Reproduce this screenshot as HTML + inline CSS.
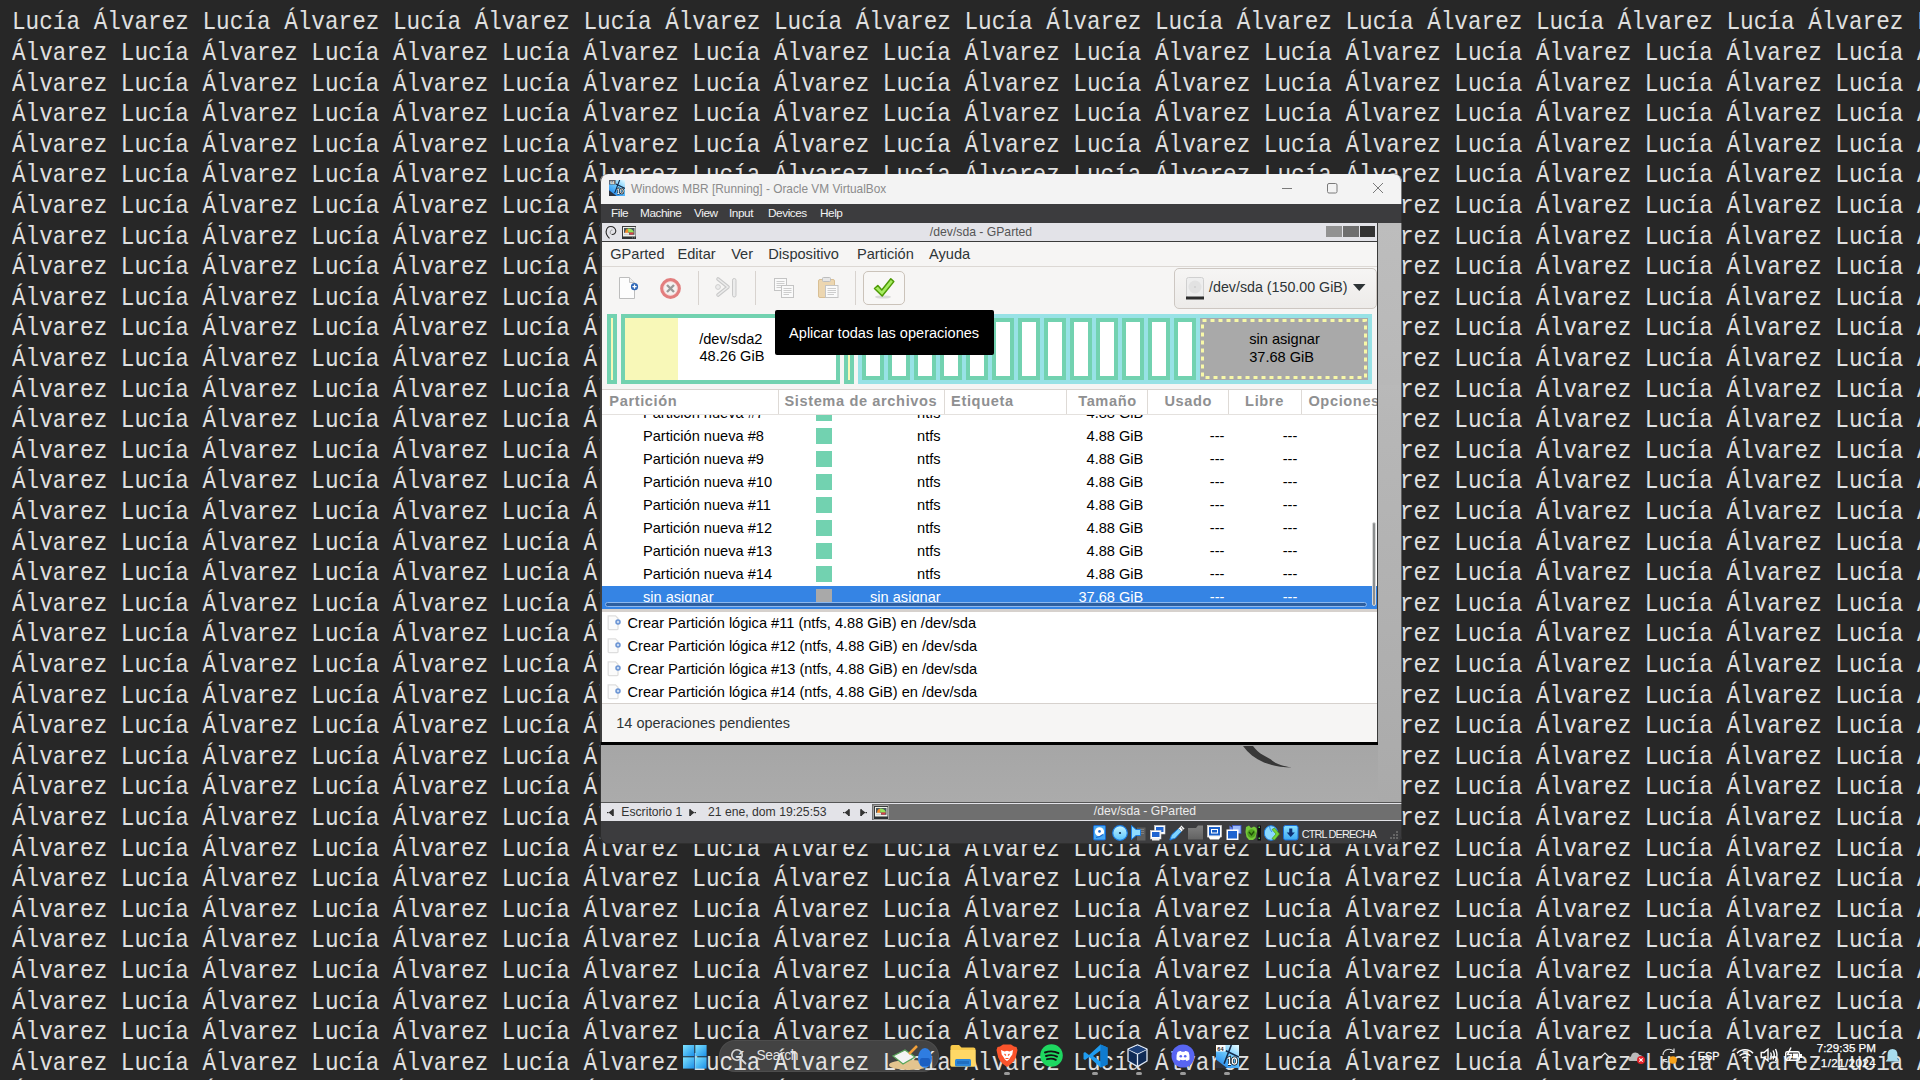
<!DOCTYPE html>
<html><head><meta charset="utf-8">
<style>
*{box-sizing:border-box}
html,body{margin:0;padding:0}
body{width:1920px;height:1080px;overflow:hidden;background:#272727;position:relative;font-family:"Liberation Sans",sans-serif}
.a{position:absolute;display:block}
#bg{position:absolute;left:0;top:0;width:1920px;height:1080px;overflow:hidden}
.r{position:absolute;left:11.7px;white-space:pre;font-family:"Liberation Mono",monospace;font-size:25px;line-height:30px;color:#e0e0e0;transform-origin:0 0;transform:scaleX(0.907)}
#win{position:absolute;left:600px;top:174px;width:802px;height:670px;border-radius:8px;overflow:hidden;background:#3c3c3e}
.t{position:absolute;white-space:pre}
#tb .t{right:auto}
</style></head><body>
<div id="bg">
<div class="r" style="top:8.30px">Lucía Álvarez Lucía Álvarez Lucía Álvarez Lucía Álvarez Lucía Álvarez Lucía Álvarez Lucía Álvarez Lucía Álvarez Lucía Álvarez Lucía Álvarez Lucía Álvarez </div>
<div class="r" style="top:38.90px">Álvarez Lucía Álvarez Lucía Álvarez Lucía Álvarez Lucía Álvarez Lucía Álvarez Lucía Álvarez Lucía Álvarez Lucía Álvarez Lucía Álvarez Lucía Álvarez Lucía </div>
<div class="r" style="top:69.50px">Álvarez Lucía Álvarez Lucía Álvarez Lucía Álvarez Lucía Álvarez Lucía Álvarez Lucía Álvarez Lucía Álvarez Lucía Álvarez Lucía Álvarez Lucía Álvarez Lucía </div>
<div class="r" style="top:100.10px">Álvarez Lucía Álvarez Lucía Álvarez Lucía Álvarez Lucía Álvarez Lucía Álvarez Lucía Álvarez Lucía Álvarez Lucía Álvarez Lucía Álvarez Lucía Álvarez Lucía </div>
<div class="r" style="top:130.70px">Álvarez Lucía Álvarez Lucía Álvarez Lucía Álvarez Lucía Álvarez Lucía Álvarez Lucía Álvarez Lucía Álvarez Lucía Álvarez Lucía Álvarez Lucía Álvarez Lucía </div>
<div class="r" style="top:161.30px">Álvarez Lucía Álvarez Lucía Álvarez Lucía Álvarez Lucía Álvarez Lucía Álvarez Lucía Álvarez Lucía Álvarez Lucía Álvarez Lucía Álvarez Lucía Álvarez Lucía </div>
<div class="r" style="top:191.90px">Álvarez Lucía Álvarez Lucía Álvarez Lucía Álvarez Lucía Álvarez Lucía Álvarez Lucía Álvarez Lucía Álvarez Lucía Álvarez Lucía Álvarez Lucía Álvarez Lucía </div>
<div class="r" style="top:222.50px">Álvarez Lucía Álvarez Lucía Álvarez Lucía Álvarez Lucía Álvarez Lucía Álvarez Lucía Álvarez Lucía Álvarez Lucía Álvarez Lucía Álvarez Lucía Álvarez Lucía </div>
<div class="r" style="top:253.10px">Álvarez Lucía Álvarez Lucía Álvarez Lucía Álvarez Lucía Álvarez Lucía Álvarez Lucía Álvarez Lucía Álvarez Lucía Álvarez Lucía Álvarez Lucía Álvarez Lucía </div>
<div class="r" style="top:283.70px">Álvarez Lucía Álvarez Lucía Álvarez Lucía Álvarez Lucía Álvarez Lucía Álvarez Lucía Álvarez Lucía Álvarez Lucía Álvarez Lucía Álvarez Lucía Álvarez Lucía </div>
<div class="r" style="top:314.30px">Álvarez Lucía Álvarez Lucía Álvarez Lucía Álvarez Lucía Álvarez Lucía Álvarez Lucía Álvarez Lucía Álvarez Lucía Álvarez Lucía Álvarez Lucía Álvarez Lucía </div>
<div class="r" style="top:344.90px">Álvarez Lucía Álvarez Lucía Álvarez Lucía Álvarez Lucía Álvarez Lucía Álvarez Lucía Álvarez Lucía Álvarez Lucía Álvarez Lucía Álvarez Lucía Álvarez Lucía </div>
<div class="r" style="top:375.50px">Álvarez Lucía Álvarez Lucía Álvarez Lucía Álvarez Lucía Álvarez Lucía Álvarez Lucía Álvarez Lucía Álvarez Lucía Álvarez Lucía Álvarez Lucía Álvarez Lucía </div>
<div class="r" style="top:406.10px">Álvarez Lucía Álvarez Lucía Álvarez Lucía Álvarez Lucía Álvarez Lucía Álvarez Lucía Álvarez Lucía Álvarez Lucía Álvarez Lucía Álvarez Lucía Álvarez Lucía </div>
<div class="r" style="top:436.70px">Álvarez Lucía Álvarez Lucía Álvarez Lucía Álvarez Lucía Álvarez Lucía Álvarez Lucía Álvarez Lucía Álvarez Lucía Álvarez Lucía Álvarez Lucía Álvarez Lucía </div>
<div class="r" style="top:467.30px">Álvarez Lucía Álvarez Lucía Álvarez Lucía Álvarez Lucía Álvarez Lucía Álvarez Lucía Álvarez Lucía Álvarez Lucía Álvarez Lucía Álvarez Lucía Álvarez Lucía </div>
<div class="r" style="top:497.90px">Álvarez Lucía Álvarez Lucía Álvarez Lucía Álvarez Lucía Álvarez Lucía Álvarez Lucía Álvarez Lucía Álvarez Lucía Álvarez Lucía Álvarez Lucía Álvarez Lucía </div>
<div class="r" style="top:528.50px">Álvarez Lucía Álvarez Lucía Álvarez Lucía Álvarez Lucía Álvarez Lucía Álvarez Lucía Álvarez Lucía Álvarez Lucía Álvarez Lucía Álvarez Lucía Álvarez Lucía </div>
<div class="r" style="top:559.10px">Álvarez Lucía Álvarez Lucía Álvarez Lucía Álvarez Lucía Álvarez Lucía Álvarez Lucía Álvarez Lucía Álvarez Lucía Álvarez Lucía Álvarez Lucía Álvarez Lucía </div>
<div class="r" style="top:589.70px">Álvarez Lucía Álvarez Lucía Álvarez Lucía Álvarez Lucía Álvarez Lucía Álvarez Lucía Álvarez Lucía Álvarez Lucía Álvarez Lucía Álvarez Lucía Álvarez Lucía </div>
<div class="r" style="top:620.30px">Álvarez Lucía Álvarez Lucía Álvarez Lucía Álvarez Lucía Álvarez Lucía Álvarez Lucía Álvarez Lucía Álvarez Lucía Álvarez Lucía Álvarez Lucía Álvarez Lucía </div>
<div class="r" style="top:650.90px">Álvarez Lucía Álvarez Lucía Álvarez Lucía Álvarez Lucía Álvarez Lucía Álvarez Lucía Álvarez Lucía Álvarez Lucía Álvarez Lucía Álvarez Lucía Álvarez Lucía </div>
<div class="r" style="top:681.50px">Álvarez Lucía Álvarez Lucía Álvarez Lucía Álvarez Lucía Álvarez Lucía Álvarez Lucía Álvarez Lucía Álvarez Lucía Álvarez Lucía Álvarez Lucía Álvarez Lucía </div>
<div class="r" style="top:712.10px">Álvarez Lucía Álvarez Lucía Álvarez Lucía Álvarez Lucía Álvarez Lucía Álvarez Lucía Álvarez Lucía Álvarez Lucía Álvarez Lucía Álvarez Lucía Álvarez Lucía </div>
<div class="r" style="top:742.70px">Álvarez Lucía Álvarez Lucía Álvarez Lucía Álvarez Lucía Álvarez Lucía Álvarez Lucía Álvarez Lucía Álvarez Lucía Álvarez Lucía Álvarez Lucía Álvarez Lucía </div>
<div class="r" style="top:773.30px">Álvarez Lucía Álvarez Lucía Álvarez Lucía Álvarez Lucía Álvarez Lucía Álvarez Lucía Álvarez Lucía Álvarez Lucía Álvarez Lucía Álvarez Lucía Álvarez Lucía </div>
<div class="r" style="top:803.90px">Álvarez Lucía Álvarez Lucía Álvarez Lucía Álvarez Lucía Álvarez Lucía Álvarez Lucía Álvarez Lucía Álvarez Lucía Álvarez Lucía Álvarez Lucía Álvarez Lucía </div>
<div class="r" style="top:834.50px">Álvarez Lucía Álvarez Lucía Álvarez Lucía Álvarez Lucía Álvarez Lucía Álvarez Lucía Álvarez Lucía Álvarez Lucía Álvarez Lucía Álvarez Lucía Álvarez Lucía </div>
<div class="r" style="top:865.10px">Álvarez Lucía Álvarez Lucía Álvarez Lucía Álvarez Lucía Álvarez Lucía Álvarez Lucía Álvarez Lucía Álvarez Lucía Álvarez Lucía Álvarez Lucía Álvarez Lucía </div>
<div class="r" style="top:895.70px">Álvarez Lucía Álvarez Lucía Álvarez Lucía Álvarez Lucía Álvarez Lucía Álvarez Lucía Álvarez Lucía Álvarez Lucía Álvarez Lucía Álvarez Lucía Álvarez Lucía </div>
<div class="r" style="top:926.30px">Álvarez Lucía Álvarez Lucía Álvarez Lucía Álvarez Lucía Álvarez Lucía Álvarez Lucía Álvarez Lucía Álvarez Lucía Álvarez Lucía Álvarez Lucía Álvarez Lucía </div>
<div class="r" style="top:956.90px">Álvarez Lucía Álvarez Lucía Álvarez Lucía Álvarez Lucía Álvarez Lucía Álvarez Lucía Álvarez Lucía Álvarez Lucía Álvarez Lucía Álvarez Lucía Álvarez Lucía </div>
<div class="r" style="top:987.50px">Álvarez Lucía Álvarez Lucía Álvarez Lucía Álvarez Lucía Álvarez Lucía Álvarez Lucía Álvarez Lucía Álvarez Lucía Álvarez Lucía Álvarez Lucía Álvarez Lucía </div>
<div class="r" style="top:1018.10px">Álvarez Lucía Álvarez Lucía Álvarez Lucía Álvarez Lucía Álvarez Lucía Álvarez Lucía Álvarez Lucía Álvarez Lucía Álvarez Lucía Álvarez Lucía Álvarez Lucía </div>
<div class="r" style="top:1048.70px">Álvarez Lucía Álvarez Lucía Álvarez Lucía Álvarez Lucía Álvarez Lucía Álvarez Lucía Álvarez Lucía Álvarez Lucía Álvarez Lucía Álvarez Lucía Álvarez Lucía </div>
<div class="r" style="top:1079.30px">Álvarez Lucía Álvarez Lucía Álvarez Lucía Álvarez Lucía Álvarez Lucía Álvarez Lucía Álvarez Lucía Álvarez Lucía Álvarez Lucía Álvarez Lucía Álvarez Lucía </div>
<div class="r" style="top:1109.90px">Álvarez Lucía Álvarez Lucía Álvarez Lucía Álvarez Lucía Álvarez Lucía Álvarez Lucía Álvarez Lucía Álvarez Lucía Álvarez Lucía Álvarez Lucía Álvarez Lucía </div>
</div>
<div id="win">
<div class="a" style="left:0px;top:0px;width:802px;height:30px;background:#f3f3f3"></div>
<svg class="a" style="left:9px;top:6px;" width="16" height="16" viewBox="0 0 16 16"><defs><linearGradient id="g10a" x1="0.9" y1="0" x2="0.2" y2="1"><stop offset="0" stop-color="#dff8ff"/><stop offset="0.45" stop-color="#6cc8fb"/><stop offset="1" stop-color="#1f86ee"/></linearGradient></defs><g transform="scale(0.695652)"><rect x="0" y="0" width="23" height="23" fill="url(#g10a)"/><path d="M0 14.6 L11 23 H0Z" fill="#2d3340"/><path d="M15.3 0 L8.1 18.8 M9.8 5.8 L23 12.1" stroke="#132a4a" stroke-width="1.6"/><rect x="0" y="0" width="9.5" height="6.5" fill="#5a5f66"/><text x="1.3" y="5.6" font-size="5.6" font-weight="bold" font-family="Liberation Sans" fill="#fff">64</text><path d="M11.5 13.5 L13.5 12.6 V19.4 M12 19.4 H15" fill="none" stroke="#111" stroke-width="2.6"/><path d="M11.5 13.5 L13.5 12.6 V19.4 M12 19.4 H15" fill="none" stroke="#fff" stroke-width="1.3"/><ellipse cx="18.4" cy="16" rx="2.2" ry="3.2" fill="none" stroke="#111" stroke-width="2.6"/><ellipse cx="18.4" cy="16" rx="2.2" ry="3.2" fill="none" stroke="#fff" stroke-width="1.3"/></g></svg>
<div class="t" style="top:9.97016px;font-size:11.85px;line-height:11.85px;color:#8b8b8b;left:31px;">Windows MBR [Running] - Oracle VM VirtualBox</div>
<svg class="a" style="left:682px;top:9px;" width="102" height="11" viewBox="0 0 102 11"><path d="M0 5.5 H10" stroke="#7a7a7a" stroke-width="1"/><rect x="45.5" y="0.5" width="9.5" height="9.5" rx="1.5" fill="none" stroke="#7a7a7a" stroke-width="1"/><path d="M91 0 L101 10 M101 0 L91 10" stroke="#7a7a7a" stroke-width="1"/></svg>
<div class="a" style="left:0px;top:30px;width:802px;height:19px;background:#3c3c3e"></div>
<div class="t" style="top:33.5125px;font-size:11.8px;line-height:11.8px;color:#f2f2f2;left:11px;letter-spacing:-0.45px">File</div>
<div class="t" style="top:33.5125px;font-size:11.8px;line-height:11.8px;color:#f2f2f2;left:40px;letter-spacing:-0.45px">Machine</div>
<div class="t" style="top:33.5125px;font-size:11.8px;line-height:11.8px;color:#f2f2f2;left:94px;letter-spacing:-0.45px">View</div>
<div class="t" style="top:33.5125px;font-size:11.8px;line-height:11.8px;color:#f2f2f2;left:129px;letter-spacing:-0.45px">Input</div>
<div class="t" style="top:33.5125px;font-size:11.8px;line-height:11.8px;color:#f2f2f2;left:168px;letter-spacing:-0.45px">Devices</div>
<div class="t" style="top:33.5125px;font-size:11.8px;line-height:11.8px;color:#f2f2f2;left:220px;letter-spacing:-0.45px">Help</div>
<div class="a" style="left:0px;top:49px;width:802px;height:598px;background:#a9a9a9"></div>
<div class="a" style="left:778px;top:49px;width:24px;height:579px;background:linear-gradient(180deg,#bdbdbd,#b2b2b2 60%,#aaaaaa)"></div>
<div class="a" style="left:0px;top:571px;width:778px;height:57px;background:linear-gradient(180deg,#a6a6a6,#ababab)"></div>
<div class="a" style="left:0px;top:49px;width:778px;height:522px;background:#f6f5f4"></div>
<div class="a" style="left:1px;top:49px;width:1px;height:522px;background:#3f3f3f"></div>
<div class="a" style="left:777px;top:49px;width:1px;height:522px;background:#3a3a3a"></div>
<div class="a" style="left:2px;top:49px;width:775px;height:18px;background:#e3e3e8"></div>
<div class="a" style="left:2px;top:67px;width:775px;height:1px;background:#3b3b3b"></div>
<div class="t" style="top:51.6739px;font-size:12.2px;line-height:12.2px;color:#555;left:381px;width:0;display:flex;justify-content:center;">/dev/sda - GParted</div>
<div class="a" style="left:726px;top:52px;width:16px;height:11px;background:#929292"></div>
<div class="a" style="left:743px;top:52px;width:16px;height:11px;background:#6e6e6e"></div>
<div class="a" style="left:760px;top:52px;width:15px;height:11px;background:#333333"></div>
<svg class="a" style="left:2px;top:49px;" width="16" height="17" viewBox="0 0 16 17"><path d="M7.5 15.4 C5 13 3.8 10.5 4.2 8.2 C4.6 5 6.5 3.5 8.8 3.5 C11.5 3.5 13.8 5.5 13.8 8 C13.8 10 12 11.6 10 11.5" fill="none" stroke="#2a2a2a" stroke-width="1.1"/><path d="M10 11.5 C8.6 11.4 8 10.2 8.3 8.8 C8.6 7.4 9.6 6.8 10.4 7" fill="none" stroke="#8a8a8a" stroke-width="0.9"/></svg>
<svg class="a" style="left:22px;top:52px;" width="14" height="13" viewBox="0 0 14 13"><rect x="0" y="0" width="14" height="12.8" fill="#3a3a3a"/><rect x="1" y="1" width="12.5" height="9.8" fill="#eef0ea"/><rect x="2" y="2" width="10.5" height="6.8" fill="#4a565c"/><path d="M3 7 Q3 3.5 5.5 2.8 L6.8 3.2 L6.2 7Z" fill="#f28a2a"/><path d="M5.8 2.4 Q10 2.2 11.6 5.5 L11.6 6.8 L6.5 6.5Z" fill="#96e45a"/><path d="M7.2 6.4 H11.8 L11 8.6 H7.4Z" fill="#d9404a"/><rect x="2" y="6.8" width="5" height="2" fill="#e6eae8"/><rect x="0" y="10.6" width="14" height="2.4" fill="#2e3234"/><rect x="10" y="11.3" width="1" height="1" fill="#777"/><rect x="12" y="11.3" width="1" height="1" fill="#777"/></svg>
<div class="a" style="left:2px;top:92px;width:775px;height:1px;background:#dcd8d4"></div>
<div class="t" style="top:72.6426px;font-size:14.6px;line-height:14.6px;color:#2e3436;left:10.2px;">GParted</div>
<div class="t" style="top:72.6426px;font-size:14.6px;line-height:14.6px;color:#2e3436;left:77.5px;">Editar</div>
<div class="t" style="top:72.6426px;font-size:14.6px;line-height:14.6px;color:#2e3436;left:131.2px;">Ver</div>
<div class="t" style="top:72.6426px;font-size:14.6px;line-height:14.6px;color:#2e3436;left:168.3px;">Dispositivo</div>
<div class="t" style="top:72.6426px;font-size:14.6px;line-height:14.6px;color:#2e3436;left:257px;">Partición</div>
<div class="t" style="top:72.6426px;font-size:14.6px;line-height:14.6px;color:#2e3436;left:329px;">Ayuda</div>
<div class="a" style="left:98px;top:97px;width:1px;height:34px;background:#d8d3cf"></div>
<div class="a" style="left:155px;top:97px;width:1px;height:34px;background:#d8d3cf"></div>
<div class="a" style="left:255px;top:97px;width:1px;height:34px;background:#d8d3cf"></div>
<svg class="a" style="left:18px;top:102px;" width="22" height="24" viewBox="0 0 22 24"><path d="M1.5 1.5 H11.5 L16.5 6.5 V22.5 H1.5 Z" fill="#fdfdfd" stroke="#bdbdbd" stroke-width="1"/><path d="M11.5 1.5 V6.5 H16.5" fill="#eee" stroke="#c4c4c4" stroke-width="1"/><circle cx="16.5" cy="10.7" r="3.6" fill="#2e66b5"/><path d="M16.5 8.6 V12.8 M14.4 10.7 H18.6" stroke="#fff" stroke-width="1.3"/></svg>
<svg class="a" style="left:59px;top:103px;" width="23" height="23" viewBox="0 0 23 23"><circle cx="11.5" cy="11.5" r="8.7" fill="#f4f2f1" stroke="#e27e7e" stroke-width="3.4"/><circle cx="11.5" cy="11.5" r="6.8" fill="none" stroke="#f7d4d4" stroke-width="0.8"/><path d="M8 8 L15 15 M15 8 L8 15" stroke="#9a9a9a" stroke-width="2.4"/></svg>
<svg class="a" style="left:113px;top:102px;" width="26" height="23" viewBox="0 0 26 23"><path d="M5 3 L15 11 L5 19" fill="none" stroke="#c9c9c9" stroke-width="3.6" stroke-linecap="round" stroke-linejoin="round"/><path d="M5 3 L15 11 L5 19" fill="none" stroke="#ececec" stroke-width="1.6" stroke-linecap="round" stroke-linejoin="round"/><circle cx="5" cy="11" r="2.4" fill="#ececec" stroke="#cfcfcf" stroke-width="1"/><rect x="19.5" y="2.5" width="3.5" height="18.5" rx="1.7" fill="#ececec" stroke="#c9c9c9" stroke-width="1"/></svg>
<svg class="a" style="left:173px;top:103px;" width="22" height="22" viewBox="0 0 22 22"><rect x="1.5" y="1.5" width="12" height="12" fill="#fafafa" stroke="#c4c4c4"/><path d="M3.5 4.5 H11.5 M3.5 6.5 H11.5 M3.5 8.5 H11.5 M3.5 10.5 H9" stroke="#cdcdcd" stroke-width="1"/><rect x="8.5" y="8.5" width="12" height="12" fill="#fafafa" stroke="#c4c4c4"/><path d="M10.5 11.5 H18.5 M10.5 13.5 H18.5 M10.5 15.5 H18.5 M10.5 17.5 H16" stroke="#cdcdcd" stroke-width="1"/></svg>
<svg class="a" style="left:217px;top:102px;" width="23" height="23" viewBox="0 0 23 23"><rect x="1.5" y="3.5" width="16" height="18" rx="1.5" fill="#ecd6b0" stroke="#d9bf94"/><rect x="5.5" y="1.5" width="8" height="4" rx="1" fill="#e6e6e6" stroke="#bdbdbd"/><rect x="8.5" y="9.5" width="12.5" height="12" fill="#fafafa" stroke="#c4c4c4"/><path d="M10.5 12.5 H19 M10.5 14.5 H19 M10.5 16.5 H19 M10.5 18.5 H17" stroke="#cdcdcd" stroke-width="1"/></svg>
<div class="a" style="left:263px;top:97px;width:42px;height:34px;background:#f8f7f6;border:1px solid #cbc3ba;border-radius:5px"></div>
<svg class="a" style="left:271px;top:102px;" width="26" height="24" viewBox="0 0 26 24"><ellipse cx="12" cy="21" rx="8" ry="1.6" fill="#000" opacity="0.12"/><path d="M3.5 12.5 L6.8 9.5 L10.8 14 L19.8 2.8 L22.8 5.6 L11.2 20 Z" fill="#a6ec62" stroke="#4e9a06" stroke-width="1.5" stroke-linejoin="round"/></svg>
<div class="a" style="left:574px;top:94px;width:203px;height:41px;background:linear-gradient(180deg,#f6f5f4,#edebe9);border:1px solid #cdc7c2;border-radius:5px"></div>
<svg class="a" style="left:586px;top:103px;" width="18" height="23" viewBox="0 0 18 23"><rect x="0.5" y="0.5" width="17" height="20" rx="2" fill="#eeeeee" stroke="#d0d0d0"/><circle cx="9" cy="10" r="6.5" fill="#e2e2e2"/><circle cx="9" cy="10" r="1" fill="#cfcfcf"/><rect x="0" y="19.5" width="18" height="3" fill="#2d2d2d"/></svg>
<div class="t" style="top:105.939px;font-size:14.25px;line-height:14.25px;color:#2e3436;left:609px;">/dev/sda (150.00 GiB)</div>
<svg class="a" style="left:753px;top:110px;" width="13" height="8" viewBox="0 0 13 8"><path d="M0 0 H12.5 L6.25 7 Z" fill="#2e3436"/></svg>
<div class="a" style="left:7px;top:140px;width:10px;height:70px;background:#fff;border:4px solid #72d2b0"></div>
<div class="a" style="left:11px;top:144px;width:2px;height:62px;background:#f8f8b8"></div>
<div class="a" style="left:21px;top:140px;width:219px;height:70px;background:#fff;border:4px solid #72d2b0"></div>
<div class="a" style="left:25px;top:144px;width:53px;height:62px;background:#f8f8b8"></div>
<div class="t" style="top:158.343px;font-size:14.6px;line-height:14.6px;color:#000;left:99.2px;">/dev/sda2</div>
<div class="t" style="top:175.243px;font-size:14.6px;line-height:14.6px;color:#000;left:99.5px;">48.26 GiB</div>
<div class="a" style="left:244px;top:140px;width:10px;height:70px;background:#fff;border:4px solid #72d2b0"></div>
<div class="a" style="left:248px;top:144px;width:2px;height:62px;background:#f8f8b8"></div>
<div class="a" style="left:258px;top:140px;width:514px;height:70px;background:#98e2e6"></div>
<div class="a" style="left:262px;top:144px;width:22px;height:62px;background:#fff;border:4px solid #72d2b0"></div>
<div class="a" style="left:288px;top:144px;width:22px;height:62px;background:#fff;border:4px solid #72d2b0"></div>
<div class="a" style="left:314px;top:144px;width:22px;height:62px;background:#fff;border:4px solid #72d2b0"></div>
<div class="a" style="left:340px;top:144px;width:22px;height:62px;background:#fff;border:4px solid #72d2b0"></div>
<div class="a" style="left:366px;top:144px;width:22px;height:62px;background:#fff;border:4px solid #72d2b0"></div>
<div class="a" style="left:392px;top:144px;width:22px;height:62px;background:#fff;border:4px solid #72d2b0"></div>
<div class="a" style="left:418px;top:144px;width:22px;height:62px;background:#fff;border:4px solid #72d2b0"></div>
<div class="a" style="left:444px;top:144px;width:22px;height:62px;background:#fff;border:4px solid #72d2b0"></div>
<div class="a" style="left:470px;top:144px;width:22px;height:62px;background:#fff;border:4px solid #72d2b0"></div>
<div class="a" style="left:496px;top:144px;width:22px;height:62px;background:#fff;border:4px solid #72d2b0"></div>
<div class="a" style="left:522px;top:144px;width:22px;height:62px;background:#fff;border:4px solid #72d2b0"></div>
<div class="a" style="left:548px;top:144px;width:22px;height:62px;background:#fff;border:4px solid #72d2b0"></div>
<div class="a" style="left:574px;top:144px;width:22px;height:62px;background:#fff;border:4px solid #72d2b0"></div>
<div class="a" style="left:600px;top:144px;width:168px;height:62px;background:#a9a9a9"></div>
<svg class="a" style="left:600px;top:144px;" width="168" height="62" viewBox="0 0 168 62"><rect x="2.5" y="2.5" width="163" height="57" fill="none" stroke="#f8f8a8" stroke-width="3" stroke-dasharray="4 4"/></svg>
<div class="t" style="top:158.443px;font-size:14.6px;line-height:14.6px;color:#000;left:649.2px;">sin asignar</div>
<div class="t" style="top:175.543px;font-size:14.6px;line-height:14.6px;color:#000;left:649.2px;">37.68 GiB</div>
<div class="a" style="left:2px;top:215px;width:775px;height:220px;background:#fff"></div>
<div class="a" style="left:2px;top:215px;width:775px;height:1px;background:#d8d3cf"></div>
<div class="a" style="left:2px;top:240px;width:775px;height:1px;background:#e4e1de"></div>
<div class="a" style="left:177.5px;top:216px;width:1px;height:24px;background:#dedad6"></div>
<div class="a" style="left:344px;top:216px;width:1px;height:24px;background:#dedad6"></div>
<div class="a" style="left:466px;top:216px;width:1px;height:24px;background:#dedad6"></div>
<div class="a" style="left:547px;top:216px;width:1px;height:24px;background:#dedad6"></div>
<div class="a" style="left:628px;top:216px;width:1px;height:24px;background:#dedad6"></div>
<div class="a" style="left:701px;top:216px;width:1px;height:24px;background:#dedad6"></div>
<div class="t" style="top:219.843px;font-size:14.6px;line-height:14.6px;color:#8f9091;font-weight:bold;left:9.3px;letter-spacing:0.62px">Partición</div>
<div class="t" style="top:219.843px;font-size:14.6px;line-height:14.6px;color:#8f9091;font-weight:bold;left:184.4px;letter-spacing:0.62px">Sistema de archivos</div>
<div class="t" style="top:219.843px;font-size:14.6px;line-height:14.6px;color:#8f9091;font-weight:bold;left:351.1px;letter-spacing:0.62px">Etiqueta</div>
<div class="t" style="top:219.843px;font-size:14.6px;line-height:14.6px;color:#8f9091;font-weight:bold;left:478.2px;letter-spacing:0.62px">Tamaño</div>
<div class="t" style="top:219.843px;font-size:14.6px;line-height:14.6px;color:#8f9091;font-weight:bold;left:564.4px;letter-spacing:0.62px">Usado</div>
<div class="t" style="top:219.843px;font-size:14.6px;line-height:14.6px;color:#8f9091;font-weight:bold;left:645.1px;letter-spacing:0.62px">Libre</div>
<div class="t" style="top:219.843px;font-size:14.6px;line-height:14.6px;color:#8f9091;font-weight:bold;left:708.4px;letter-spacing:0.62px">Opciones</div>
<div class="a" style="left:777px;top:211px;width:1px;height:35px;background:#3a3a3a"></div>
<div class="a" style="left:778px;top:211px;width:24px;height:35px;background:linear-gradient(180deg,#b9b9b9,#b7b7b7)"></div>
<div class="a" style="left:2px;top:241px;width:775px;height:194px;overflow:hidden">
<div class="a" style="left:0px;top:171px;width:775px;height:23px;background:#3584e4"></div>
<div class="t" style="top:-9.35744px;font-size:14.6px;line-height:14.6px;color:#000;left:41px;">Partición nueva #7</div>
<div class="a" style="left:214px;top:-10px;width:16px;height:16px;background:#72d2b0"></div>
<div class="t" style="top:-9.35744px;font-size:14.6px;line-height:14.6px;color:#000;right:436.4px;">ntfs</div>
<div class="t" style="top:-9.35744px;font-size:14.6px;line-height:14.6px;color:#000;right:233.7px;">4.88 GiB</div>
<div class="t" style="top:-9.35744px;font-size:14.6px;line-height:14.6px;color:#000;right:152.6px;">---</div>
<div class="t" style="top:-9.35744px;font-size:14.6px;line-height:14.6px;color:#000;right:79.7px;">---</div>
<div class="t" style="top:13.6426px;font-size:14.6px;line-height:14.6px;color:#000;left:41px;">Partición nueva #8</div>
<div class="a" style="left:214px;top:13px;width:16px;height:16px;background:#72d2b0"></div>
<div class="t" style="top:13.6426px;font-size:14.6px;line-height:14.6px;color:#000;right:436.4px;">ntfs</div>
<div class="t" style="top:13.6426px;font-size:14.6px;line-height:14.6px;color:#000;right:233.7px;">4.88 GiB</div>
<div class="t" style="top:13.6426px;font-size:14.6px;line-height:14.6px;color:#000;right:152.6px;">---</div>
<div class="t" style="top:13.6426px;font-size:14.6px;line-height:14.6px;color:#000;right:79.7px;">---</div>
<div class="t" style="top:36.6426px;font-size:14.6px;line-height:14.6px;color:#000;left:41px;">Partición nueva #9</div>
<div class="a" style="left:214px;top:36px;width:16px;height:16px;background:#72d2b0"></div>
<div class="t" style="top:36.6426px;font-size:14.6px;line-height:14.6px;color:#000;right:436.4px;">ntfs</div>
<div class="t" style="top:36.6426px;font-size:14.6px;line-height:14.6px;color:#000;right:233.7px;">4.88 GiB</div>
<div class="t" style="top:36.6426px;font-size:14.6px;line-height:14.6px;color:#000;right:152.6px;">---</div>
<div class="t" style="top:36.6426px;font-size:14.6px;line-height:14.6px;color:#000;right:79.7px;">---</div>
<div class="t" style="top:59.6426px;font-size:14.6px;line-height:14.6px;color:#000;left:41px;">Partición nueva #10</div>
<div class="a" style="left:214px;top:59px;width:16px;height:16px;background:#72d2b0"></div>
<div class="t" style="top:59.6426px;font-size:14.6px;line-height:14.6px;color:#000;right:436.4px;">ntfs</div>
<div class="t" style="top:59.6426px;font-size:14.6px;line-height:14.6px;color:#000;right:233.7px;">4.88 GiB</div>
<div class="t" style="top:59.6426px;font-size:14.6px;line-height:14.6px;color:#000;right:152.6px;">---</div>
<div class="t" style="top:59.6426px;font-size:14.6px;line-height:14.6px;color:#000;right:79.7px;">---</div>
<div class="t" style="top:82.6426px;font-size:14.6px;line-height:14.6px;color:#000;left:41px;">Partición nueva #11</div>
<div class="a" style="left:214px;top:82px;width:16px;height:16px;background:#72d2b0"></div>
<div class="t" style="top:82.6426px;font-size:14.6px;line-height:14.6px;color:#000;right:436.4px;">ntfs</div>
<div class="t" style="top:82.6426px;font-size:14.6px;line-height:14.6px;color:#000;right:233.7px;">4.88 GiB</div>
<div class="t" style="top:82.6426px;font-size:14.6px;line-height:14.6px;color:#000;right:152.6px;">---</div>
<div class="t" style="top:82.6426px;font-size:14.6px;line-height:14.6px;color:#000;right:79.7px;">---</div>
<div class="t" style="top:105.643px;font-size:14.6px;line-height:14.6px;color:#000;left:41px;">Partición nueva #12</div>
<div class="a" style="left:214px;top:105px;width:16px;height:16px;background:#72d2b0"></div>
<div class="t" style="top:105.643px;font-size:14.6px;line-height:14.6px;color:#000;right:436.4px;">ntfs</div>
<div class="t" style="top:105.643px;font-size:14.6px;line-height:14.6px;color:#000;right:233.7px;">4.88 GiB</div>
<div class="t" style="top:105.643px;font-size:14.6px;line-height:14.6px;color:#000;right:152.6px;">---</div>
<div class="t" style="top:105.643px;font-size:14.6px;line-height:14.6px;color:#000;right:79.7px;">---</div>
<div class="t" style="top:128.643px;font-size:14.6px;line-height:14.6px;color:#000;left:41px;">Partición nueva #13</div>
<div class="a" style="left:214px;top:128px;width:16px;height:16px;background:#72d2b0"></div>
<div class="t" style="top:128.643px;font-size:14.6px;line-height:14.6px;color:#000;right:436.4px;">ntfs</div>
<div class="t" style="top:128.643px;font-size:14.6px;line-height:14.6px;color:#000;right:233.7px;">4.88 GiB</div>
<div class="t" style="top:128.643px;font-size:14.6px;line-height:14.6px;color:#000;right:152.6px;">---</div>
<div class="t" style="top:128.643px;font-size:14.6px;line-height:14.6px;color:#000;right:79.7px;">---</div>
<div class="t" style="top:151.643px;font-size:14.6px;line-height:14.6px;color:#000;left:41px;">Partición nueva #14</div>
<div class="a" style="left:214px;top:151px;width:16px;height:16px;background:#72d2b0"></div>
<div class="t" style="top:151.643px;font-size:14.6px;line-height:14.6px;color:#000;right:436.4px;">ntfs</div>
<div class="t" style="top:151.643px;font-size:14.6px;line-height:14.6px;color:#000;right:233.7px;">4.88 GiB</div>
<div class="t" style="top:151.643px;font-size:14.6px;line-height:14.6px;color:#000;right:152.6px;">---</div>
<div class="t" style="top:151.643px;font-size:14.6px;line-height:14.6px;color:#000;right:79.7px;">---</div>
<div class="t" style="top:174.643px;font-size:14.6px;line-height:14.6px;color:#fff;left:41px;">sin asignar</div>
<div class="a" style="left:214px;top:174px;width:16px;height:16px;background:#a9a9a9"></div>
<div class="t" style="top:174.643px;font-size:14.6px;line-height:14.6px;color:#fff;right:436.4px;">sin asignar</div>
<div class="t" style="top:174.643px;font-size:14.6px;line-height:14.6px;color:#fff;right:233.7px;">37.68 GiB</div>
<div class="t" style="top:174.643px;font-size:14.6px;line-height:14.6px;color:#fff;right:152.6px;">---</div>
<div class="t" style="top:174.643px;font-size:14.6px;line-height:14.6px;color:#fff;right:79.7px;">---</div>
<div class="a" style="left:3px;top:187px;width:762px;height:5px;background:#2d5fa0;border:1px solid #8db8ee;border-radius:3px"></div>
<div class="a" style="left:769.5px;top:107px;width:4px;height:84px;background:#8b8e8f;border:1px solid #d8d8d8;border-radius:2px"></div>
</div>
<div class="a" style="left:2px;top:435px;width:775px;height:3px;background:#d6d1cd"></div>
<div class="a" style="left:2px;top:438px;width:775px;height:92px;background:#fff"></div>
<div class="a" style="left:2px;top:529px;width:775px;height:1px;background:#d6d1cd"></div>
<svg class="a" style="left:6px;top:440px;" width="16" height="17" viewBox="0 0 16 17"><path d="M2.2 1.8 H9.5 L12 4.3 V14.8 Q12 15.6 11.2 15.6 H3 Q2.2 15.6 2.2 14.8 Z" fill="#fbfbfb" stroke="#dedede" stroke-width="1.3"/><circle cx="12" cy="8" r="2" fill="#c8d8f0" stroke="#6a94d4" stroke-width="1.5"/></svg>
<div class="t" style="top:441.643px;font-size:14.6px;line-height:14.6px;color:#000;left:27.5px;">Crear Partición lógica #11 (ntfs, 4.88 GiB) en /dev/sda</div>
<svg class="a" style="left:6px;top:463px;" width="16" height="17" viewBox="0 0 16 17"><path d="M2.2 1.8 H9.5 L12 4.3 V14.8 Q12 15.6 11.2 15.6 H3 Q2.2 15.6 2.2 14.8 Z" fill="#fbfbfb" stroke="#dedede" stroke-width="1.3"/><circle cx="12" cy="8" r="2" fill="#c8d8f0" stroke="#6a94d4" stroke-width="1.5"/></svg>
<div class="t" style="top:464.643px;font-size:14.6px;line-height:14.6px;color:#000;left:27.5px;">Crear Partición lógica #12 (ntfs, 4.88 GiB) en /dev/sda</div>
<svg class="a" style="left:6px;top:486px;" width="16" height="17" viewBox="0 0 16 17"><path d="M2.2 1.8 H9.5 L12 4.3 V14.8 Q12 15.6 11.2 15.6 H3 Q2.2 15.6 2.2 14.8 Z" fill="#fbfbfb" stroke="#dedede" stroke-width="1.3"/><circle cx="12" cy="8" r="2" fill="#c8d8f0" stroke="#6a94d4" stroke-width="1.5"/></svg>
<div class="t" style="top:487.643px;font-size:14.6px;line-height:14.6px;color:#000;left:27.5px;">Crear Partición lógica #13 (ntfs, 4.88 GiB) en /dev/sda</div>
<svg class="a" style="left:6px;top:509px;" width="16" height="17" viewBox="0 0 16 17"><path d="M2.2 1.8 H9.5 L12 4.3 V14.8 Q12 15.6 11.2 15.6 H3 Q2.2 15.6 2.2 14.8 Z" fill="#fbfbfb" stroke="#dedede" stroke-width="1.3"/><circle cx="12" cy="8" r="2" fill="#c8d8f0" stroke="#6a94d4" stroke-width="1.5"/></svg>
<div class="t" style="top:510.643px;font-size:14.6px;line-height:14.6px;color:#000;left:27.5px;">Crear Partición lógica #14 (ntfs, 4.88 GiB) en /dev/sda</div>
<div class="t" style="top:541.753px;font-size:14.47px;line-height:14.47px;color:#2e3436;left:16.3px;">14 operaciones pendientes</div>
<div class="a" style="left:0px;top:568px;width:778px;height:3px;background:#000"></div>
<div class="a" style="left:175px;top:136px;width:219px;height:45px;background:#000;border-radius:2px"></div>
<div class="t" style="top:151.676px;font-size:14.56px;line-height:14.56px;color:#fff;left:189.1px;">Aplicar todas las operaciones</div>
<svg class="a" style="left:636px;top:571px;" width="60" height="26" viewBox="0 0 60 26"><path d="M7 1 L17 1 C19.5 4.5 23 8 27 10 L35 14.5 C38 17.5 43 20.5 56 22.5 C45 22.5 36 20.5 28 17.5 C19 13.5 12 8 7 1 Z" fill="#383838"/></svg>
<div class="a" style="left:0px;top:628px;width:802px;height:1px;background:#555"></div>
<div class="a" style="left:0px;top:629px;width:802px;height:18px;background:#e3e3e8"></div>
<svg class="a" style="left:7px;top:634px;" width="8" height="9" viewBox="0 0 8 9"><rect x="0" y="4" width="1.5" height="1.2" fill="#333"/><path d="M1.5 4.6 L5.2 1.8 V7.4 Z" fill="#333"/><rect x="5" y="1.2" width="1.8" height="6.8" fill="#333"/></svg>
<div class="t" style="top:632.174px;font-size:12.2px;line-height:12.2px;color:#333;left:21.3px;">Escritorio 1</div>
<svg class="a" style="left:88px;top:634px;" width="8" height="9" viewBox="0 0 8 9"><rect x="6.5" y="4" width="1.5" height="1.2" fill="#333"/><path d="M6.5 4.6 L2.8 1.8 V7.4 Z" fill="#333"/><rect x="1.2" y="1.2" width="1.8" height="6.8" fill="#333"/></svg>
<div class="t" style="top:632.174px;font-size:12.2px;line-height:12.2px;color:#333;left:108px;">21 ene, dom 19:25:53</div>
<svg class="a" style="left:243px;top:634px;" width="8" height="9" viewBox="0 0 8 9"><rect x="0" y="4" width="1.5" height="1.2" fill="#333"/><path d="M1.5 4.6 L5.2 1.8 V7.4 Z" fill="#333"/><rect x="5" y="1.2" width="1.8" height="6.8" fill="#333"/></svg>
<svg class="a" style="left:259px;top:634px;" width="8" height="9" viewBox="0 0 8 9"><rect x="6.5" y="4" width="1.5" height="1.2" fill="#333"/><path d="M6.5 4.6 L2.8 1.8 V7.4 Z" fill="#333"/><rect x="1.2" y="1.2" width="1.8" height="6.8" fill="#333"/></svg>
<div class="a" style="left:272px;top:630px;width:530px;height:16px;background:#6f6f6f"></div>
<svg class="a" style="left:273px;top:631px;" width="16" height="15" viewBox="0 0 16 15"><rect x="0.5" y="0.5" width="15" height="14" fill="#d8d8d8"/><g transform="translate(1,1)"><rect x="0" y="0" width="14" height="12.8" fill="#3a3a3a"/><rect x="1" y="1" width="12.5" height="9.8" fill="#eef0ea"/><rect x="2" y="2" width="10.5" height="6.8" fill="#4a565c"/><path d="M3 7 Q3 3.5 5.5 2.8 L6.8 3.2 L6.2 7Z" fill="#f28a2a"/><path d="M5.8 2.4 Q10 2.2 11.6 5.5 L11.6 6.8 L6.5 6.5Z" fill="#96e45a"/><path d="M7.2 6.4 H11.8 L11 8.6 H7.4Z" fill="#d9404a"/><rect x="2" y="6.8" width="5" height="2" fill="#e6eae8"/><rect x="0" y="10.6" width="14" height="2.4" fill="#2e3234"/></g></svg>
<div class="t" style="top:631.374px;font-size:12.2px;line-height:12.2px;color:#ececec;left:545px;width:0;display:flex;justify-content:center;">/dev/sda - GParted</div>
<div class="a" style="left:0px;top:647px;width:802px;height:23px;background:#3c3c3e"></div>
<svg class="a" style="left:493px;top:651px;" width="16" height="16" viewBox="0 0 16 16"><rect x="0.5" y="0.5" width="12" height="14.5" rx="1.2" fill="#45a6f2" stroke="#1766cf"/><circle cx="6.5" cy="6.8" r="4.6" fill="#fff"/><circle cx="6.5" cy="6.4" r="1.3" fill="#1766cf"/><path d="M3 12.5 Q7 12 10 9.5" stroke="#1766cf" stroke-width="1.2" fill="none"/></svg>
<svg class="a" style="left:511.5px;top:650.5px;" width="16" height="16" viewBox="0 0 16 16"><defs><linearGradient id="cdg" x1="0" y1="0" x2="0" y2="1"><stop offset="0" stop-color="#c8f4ff"/><stop offset="1" stop-color="#58c4fa"/></linearGradient></defs><circle cx="8" cy="8" r="7.3" fill="url(#cdg)" stroke="#1a7ee6" stroke-width="1.2"/><circle cx="8" cy="8" r="1.1" fill="#0b2a55"/></svg>
<svg class="a" style="left:531px;top:651px;" width="16" height="16" viewBox="0 0 16 16"><rect x="6" y="2.5" width="8.5" height="13" fill="#5e5e5e"/><path d="M7.5 4.5 H13 M7.5 6.5 H13 M7.5 8.5 H13" stroke="#888" stroke-width="0.8"/><path d="M0.5 0.5 L5 4.5 H9.5 V10.5 H5 L0.5 14.5Z" fill="#8fdcff" stroke="#1a7ee6" stroke-width="1"/></svg>
<svg class="a" style="left:550px;top:651px;" width="16" height="16" viewBox="0 0 16 16"><rect x="4.5" y="0.5" width="10.5" height="8.5" fill="#fff" stroke="#ccc" stroke-width="0.6"/><rect x="6" y="2" width="7.5" height="5" fill="#1f64d0"/><rect x="0.5" y="5.5" width="10.5" height="8.5" fill="#fff" stroke="#ccc" stroke-width="0.6"/><rect x="2" y="7" width="7.5" height="5" fill="#1f64d0"/><rect x="2" y="14" width="7.5" height="1.5" fill="#eee"/></svg>
<svg class="a" style="left:569px;top:651px;" width="16" height="16" viewBox="0 0 16 16"><path d="M1 14.5 L2.5 10 L9.5 3.5 L12.5 6.5 L6 13.5Z" fill="#7fd3ff" stroke="#1a7ee6" stroke-width="1"/><path d="M9.5 3.5 L12.5 0.5 L15.5 3.5 L12.5 6.5Z" fill="#fff" stroke="#888" stroke-width="0.6"/><circle cx="12.4" cy="2.8" r="0.6" fill="#333"/><circle cx="13.6" cy="4" r="0.6" fill="#333"/><circle cx="1.5" cy="14.5" r="1" fill="#1a7ee6"/></svg>
<svg class="a" style="left:588px;top:651px;" width="16" height="16" viewBox="0 0 16 16"><defs><linearGradient id="fdg" x1="0" y1="0" x2="0" y2="1"><stop offset="0" stop-color="#808080"/><stop offset="1" stop-color="#626262"/></linearGradient></defs><path d="M0 3 H8 L10 0.5 H15 V14.5 H0Z" fill="url(#fdg)"/></svg>
<svg class="a" style="left:607px;top:651px;" width="16" height="16" viewBox="0 0 16 16"><rect x="0.5" y="0.5" width="14" height="11.5" fill="#fff" stroke="#ddd" stroke-width="0.6"/><rect x="2" y="2" width="11" height="8.5" fill="#1a5fc8"/><rect x="4" y="4" width="7" height="4.5" fill="#fff"/><rect x="5" y="5" width="5" height="2.5" fill="#1a5fc8"/><path d="M1.5 12 H13.5 L12 14.5 H3Z" fill="#fff"/></svg>
<svg class="a" style="left:626px;top:651px;" width="16" height="16" viewBox="0 0 16 16"><rect x="6.5" y="0.5" width="8.5" height="8" fill="#9bb8f8" stroke="#3a55c8" stroke-width="0.8"/><path d="M3.5 0.5 L6.5 3 V6 L3.5 7.5Z" fill="#5a7ae8"/><rect x="0.5" y="4.5" width="12" height="10.5" fill="#fff"/><rect x="2" y="6" width="9" height="7.5" fill="#1f64d0"/></svg>
<svg class="a" style="left:645px;top:651px;" width="16" height="16" viewBox="0 0 16 16"><path d="M1 2 L4 0.5 L6 3 L9 1.5 L11.5 3 L12 6 L10.5 13 L8 15 L4 15 L1.5 12 L0.5 7Z" fill="#74c83a"/><circle cx="6.5" cy="8.5" r="4.2" fill="#4fa020"/><path d="M4 7 L6.5 10 L9 6.5" fill="none" stroke="#1f4a08" stroke-width="1.3"/><rect x="12.5" y="0.5" width="3.5" height="15" fill="#0d0d0d"/><rect x="13.5" y="1.5" width="1.5" height="1.5" fill="#5c5"/><rect x="13.5" y="12.5" width="1.5" height="1.5" fill="#5c5"/></svg>
<svg class="a" style="left:664px;top:651px;" width="16" height="16" viewBox="0 0 16 16"><ellipse cx="7" cy="8" rx="6.7" ry="7.3" fill="#8ad8ff" stroke="#1a7ee6" stroke-width="1"/><path d="M5.5 1.5 Q6 5 8 7" stroke="#1a7ee6" stroke-width="0.8" fill="none"/><path d="M8 4.5 L10.5 3 L15.5 9 L10.5 15 L8 13.5 L12 9Z" fill="#74d43a" stroke="#3c8a12" stroke-width="0.6"/></svg>
<svg class="a" style="left:683px;top:651px;" width="16" height="16" viewBox="0 0 16 16"><defs><linearGradient id="kbg" x1="0" y1="0" x2="0" y2="1"><stop offset="0" stop-color="#8ae0ff"/><stop offset="1" stop-color="#3aa8f2"/></linearGradient></defs><rect x="0.5" y="0.5" width="14.5" height="14.5" rx="2" fill="url(#kbg)" stroke="#1a6fd8"/><path d="M6.2 3.5 H9.3 V7.5 H11.8 L7.75 12 L3.7 7.5 H6.2Z" fill="#0d2f73"/></svg>
<div class="t" style="top:654.574px;font-size:10.9px;line-height:10.9px;color:#f0f0f0;left:701.7px;letter-spacing:-0.85px">CTRL DERECHA</div>
<svg class="a" style="left:788px;top:657px;" width="11" height="11" viewBox="0 0 11 11"><g fill="#666"><rect x="8" y="0" width="2" height="2"/><rect x="5" y="3" width="2" height="2"/><rect x="8" y="3" width="2" height="2"/><rect x="2" y="6" width="2" height="2"/><rect x="5" y="6" width="2" height="2"/><rect x="8" y="6" width="2" height="2"/></g></svg>
<div class="a" style="left:0;top:0;width:802px;height:670px;border-left:1px solid rgba(40,40,40,0.9);border-right:1px solid rgba(40,40,40,0.6);border-bottom:1px solid rgba(40,40,40,0.6);border-radius:8px"></div>
</div>
<div id="tb">
<svg class="a" style="left:683px;top:1045px;" width="24" height="24" viewBox="0 0 24 24"><defs><linearGradient id="wg" x1="0" y1="0" x2="1" y2="1"><stop offset="0" stop-color="#7fe3ff"/><stop offset="1" stop-color="#1a8fe8"/></linearGradient></defs><rect x="0" y="0" width="11.3" height="11.3" fill="url(#wg)"/><rect x="12.3" y="0" width="11.3" height="11.3" fill="url(#wg)"/><rect x="0" y="12.3" width="11.3" height="11.3" fill="url(#wg)"/><rect x="12.3" y="12.3" width="11.3" height="11.3" fill="url(#wg)"/></svg>
<div class="a" style="left:719px;top:1040px;width:220px;height:32px;background:rgba(255,255,255,0.135);border:1px solid rgba(255,255,255,0.05);border-radius:16px"></div>
<svg class="a" style="left:730px;top:1048px;" width="17" height="17" viewBox="0 0 17 17"><circle cx="7" cy="7" r="5.2" fill="none" stroke="#d8d8d8" stroke-width="1.6"/><path d="M10.8 10.8 L15.5 15.5" stroke="#d8d8d8" stroke-width="1.8" stroke-linecap="round"/></svg>
<div class="t" style="top:1048.92px;font-size:13.8px;line-height:13.8px;color:#e4e4e4;left:756.5px;letter-spacing:-0.35px">Search</div>
<svg class="a" style="left:887px;top:1044px;" width="46" height="27" viewBox="0 0 46 27"><ellipse cx="22" cy="21" rx="20" ry="5" fill="#e3c48f"/><path d="M6 12 L18 6 L28 13 L16 20Z" fill="#f4f4f4" stroke="#5aa55a" stroke-width="1.3"/><path d="M22 10 L30 2" stroke="#f3a13a" stroke-width="2.5"/><ellipse cx="38" cy="14" rx="7" ry="10" fill="#2f7de1"/><rect x="33" y="14" width="10" height="8" rx="2" fill="#1b5fc2"/></svg>
<svg class="a" style="left:950px;top:1044px;" width="26" height="23" viewBox="0 0 26 23"><path d="M0.5 3 Q0.5 1 2.5 1 H9 L11.5 3.5 H23.5 Q25.5 3.5 25.5 5.5 V21 Q25.5 22.5 24 22.5 H2 Q0.5 22.5 0.5 21Z" fill="#f7c94b"/><path d="M0.5 6 H25.5 V21 Q25.5 22.5 24 22.5 H2 Q0.5 22.5 0.5 21Z" fill="#ffd866"/><rect x="5" y="15" width="16" height="7.5" rx="1.5" fill="#2b86d9"/><rect x="7" y="17" width="12" height="3" fill="#1f6fc0"/></svg>
<svg class="a" style="left:996px;top:1044px;" width="22" height="24" viewBox="0 0 22 24"><path d="M4 2.5 L7 0.5 H15 L18 2.5 L20.5 3 L21.5 6 L19.8 13.5 Q18.5 17.5 15 20 L11 23 L7 20 Q3.5 17.5 2.2 13.5 L0.5 6 L1.5 3Z" fill="#fb542b"/><path d="M5 6 L8.5 7.5 L11 6.8 L13.5 7.5 L17 6 L16.3 10.5 L14.5 13 L13 15.5 L11 17 L9 15.5 L7.5 13 L5.7 10.5Z" fill="#fff"/><path d="M8.5 10 L10 11.5 M13.5 10 L12 11.5 M9.5 14.5 H12.5" stroke="#fb542b" stroke-width="1.1"/></svg>
<svg class="a" style="left:1040px;top:1044px;" width="23" height="23" viewBox="0 0 23 23"><circle cx="11.5" cy="11.5" r="11.3" fill="#1ed760"/><path d="M5 8.5 Q12 6 18.5 9.2 M6 12 Q12 10 17 12.6 M7 15.2 Q12 13.8 15.8 15.8" fill="none" stroke="#111" stroke-width="1.9" stroke-linecap="round"/></svg>
<svg class="a" style="left:1083px;top:1044px;" width="25" height="24" viewBox="0 0 25 24"><path d="M17.5 0.5 L24.5 3.5 V20.5 L17.5 23.5 L6 13 L2 16 L0.5 15 V9 L2 8 L6 11 L17.5 0.5Z M17.5 6.5 L10 12 L17.5 17.5Z" fill="#1f9cf0" fill-rule="evenodd"/><path d="M17.5 0.5 L24.5 3.5 V20.5 L17.5 23.5Z" fill="#0f7bd0"/></svg>
<svg class="a" style="left:1127px;top:1044px;" width="21" height="24" viewBox="0 0 21 24"><path d="M10.5 0.8 L20 5.2 V17 L10.5 22.6 L1 17 V5.2Z" fill="#0f2a55" stroke="#dfe8f4" stroke-width="1.3" stroke-linejoin="round"/><path d="M1 5.2 L10.5 10 L20 5.2 M10.5 10 V22.6" fill="none" stroke="#dfe8f4" stroke-width="1.3"/><path d="M1.6 5.4 L10.5 1.4 L19.4 5.4 L10.5 9.4Z" fill="#1c3f78"/></svg>
<svg class="a" style="left:1171px;top:1044px;" width="24" height="24" viewBox="0 0 24 24"><circle cx="12" cy="12" r="11.5" fill="#5865f2"/><path d="M6.5 8 Q9 6.5 10 7 L10.5 7.8 Q12 7.5 13.5 7.8 L14 7 Q15 6.5 17.5 8 Q19 11 18.5 15.5 Q17 16.8 15.5 17 L14.7 15.8 Q12 16.6 9.3 15.8 L8.5 17 Q7 16.8 5.5 15.5 Q5 11 6.5 8Z" fill="#fff"/><circle cx="9.8" cy="12.3" r="1.3" fill="#5865f2"/><circle cx="14.2" cy="12.3" r="1.3" fill="#5865f2"/></svg>
<svg class="a" style="left:1215.5px;top:1044.5px;" width="23" height="23" viewBox="0 0 23 23"><defs><linearGradient id="g10b" x1="0.9" y1="0" x2="0.2" y2="1"><stop offset="0" stop-color="#dff8ff"/><stop offset="0.45" stop-color="#6cc8fb"/><stop offset="1" stop-color="#1f86ee"/></linearGradient></defs><g transform="scale(1)"><rect x="0" y="0" width="23" height="23" fill="url(#g10b)"/><path d="M0 14.6 L11 23 H0Z" fill="#2d3340"/><path d="M15.3 0 L8.1 18.8 M9.8 5.8 L23 12.1" stroke="#132a4a" stroke-width="1.6"/><rect x="0" y="0" width="9.5" height="6.5" fill="#fbfbfb"/><text x="1.3" y="5.6" font-size="5.6" font-weight="bold" font-family="Liberation Sans" fill="#222">64</text><path d="M11.5 13.5 L13.5 12.6 V19.4 M12 19.4 H15" fill="none" stroke="#111" stroke-width="2.6"/><path d="M11.5 13.5 L13.5 12.6 V19.4 M12 19.4 H15" fill="none" stroke="#fff" stroke-width="1.3"/><ellipse cx="18.4" cy="16" rx="2.2" ry="3.2" fill="none" stroke="#111" stroke-width="2.6"/><ellipse cx="18.4" cy="16" rx="2.2" ry="3.2" fill="none" stroke="#fff" stroke-width="1.3"/></g></svg>
<div class="a" style="left:1003.7px;top:1072.2px;width:6px;height:2.6px;background:#9a9a9a;border-radius:2px"></div>
<div class="a" style="left:1092px;top:1072.2px;width:6px;height:2.6px;background:#9a9a9a;border-radius:2px"></div>
<div class="a" style="left:1136.2px;top:1072.2px;width:6px;height:2.6px;background:#9a9a9a;border-radius:2px"></div>
<div class="a" style="left:1180.1px;top:1072.2px;width:6px;height:2.6px;background:#9a9a9a;border-radius:2px"></div>
<div class="a" style="left:1224px;top:1072.2px;width:6px;height:2.6px;background:#9a9a9a;border-radius:2px"></div>
<svg class="a" style="left:1599px;top:1052px;" width="12" height="7" viewBox="0 0 12 7"><path d="M0.5 6.5 L6 1 L11.5 6.5" fill="none" stroke="#e8e8e8" stroke-width="1.2"/></svg>
<svg class="a" style="left:1628px;top:1049px;" width="18" height="16" viewBox="0 0 18 16"><path d="M2 12 Q0 12 0.5 9.5 Q1 7.5 3 7.5 Q3.5 3.5 7.5 3.5 Q10.5 3.5 11.5 6 Q14.5 6 14.5 9 V12Z" fill="#bbb"/><circle cx="13" cy="11" r="4" fill="#e3242b"/><path d="M11.3 9.3 L14.7 12.7 M14.7 9.3 L11.3 12.7" stroke="#fff" stroke-width="1.1"/></svg>
<svg class="a" style="left:1660px;top:1047px;" width="18" height="18" viewBox="0 0 18 18"><path d="M3 8 A6 6 0 0 1 14 5 M14 1.5 V5.5 H10" fill="none" stroke="#e0e0e0" stroke-width="1.2"/><path d="M13 11 A6 6 0 0 1 3 13 M3 16.5 V12.5 H7" fill="none" stroke="#e0e0e0" stroke-width="1.2"/><circle cx="13" cy="13" r="3.8" fill="#f7a21b"/></svg>
<div class="t" style="top:1051.36px;font-size:10.8px;line-height:10.8px;color:#fff;left:1697.8px;-webkit-text-stroke:0.3px #fff">ESP</div>
<svg class="a" style="left:1736px;top:1048px;" width="18" height="14" viewBox="0 0 18 14"><path d="M1 5.2 A11 11 0 0 1 17 5.2 M3.6 7.8 A7.3 7.3 0 0 1 14.4 7.8 M6.1 10.3 A3.8 3.8 0 0 1 11.9 10.3" fill="none" stroke="#fff" stroke-width="1.5"/><circle cx="9" cy="12.6" r="1.3" fill="#fff"/></svg>
<svg class="a" style="left:1760px;top:1048px;" width="18" height="14" viewBox="0 0 18 14"><path d="M1.2 4.5 H4 L8 1.2 V12.8 L4 9.5 H1.2Z" fill="none" stroke="#fff" stroke-width="1.4"/><path d="M10.5 4.5 Q12 7 10.5 9.5 M13 2.5 Q15.5 7 13 11.5 M15.5 1 Q18.5 7 15.5 13" fill="none" stroke="#fff" stroke-width="1.4"/></svg>
<svg class="a" style="left:1784px;top:1047px;" width="19" height="15" viewBox="0 0 19 15"><rect x="1.7" y="4.7" width="13.6" height="8.6" rx="1.5" fill="none" stroke="#fff" stroke-width="1.4"/><rect x="9" y="6.5" width="5" height="5" fill="#fff"/><rect x="16" y="7" width="2" height="4" fill="#fff"/><path d="M7 0.5 L3.5 7.5 H7.5 L5.5 13" fill="none" stroke="#fff" stroke-width="1.5"/></svg>
<div class="t" style="top:1041.78px;font-size:11.6px;line-height:11.6px;color:#fff;right:44px;-webkit-text-stroke:0.25px #fff">7:29:35 PM</div>
<div class="t" style="top:1057.38px;font-size:11.6px;line-height:11.6px;color:#fff;right:44px;letter-spacing:0.4px;-webkit-text-stroke:0.25px #fff">1/21/2024</div>
<svg class="a" style="left:1885px;top:1048px;" width="15" height="17" viewBox="0 0 15 17"><path d="M7.5 1 Q12.5 1 12.5 7 V11 L14.5 13.5 H0.5 L2.5 11 V7 Q2.5 1 7.5 1Z" fill="#a8dced"/><path d="M5.5 14.5 Q7.5 16.5 9.5 14.5" fill="#a8dced"/></svg>
</div>
</body></html>
